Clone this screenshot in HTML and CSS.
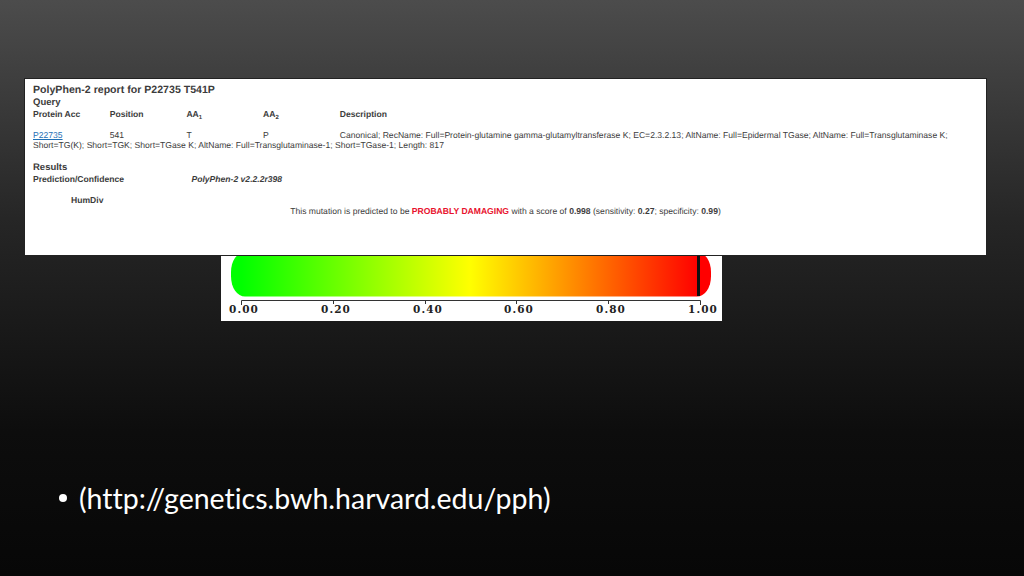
FILE: index.html
```html
<!DOCTYPE html>
<html lang="en">
<head>
<meta charset="utf-8">
<title>PolyPhen-2 report</title>
<link rel="stylesheet" href="styles.css">
</head>
<body>
<main class="slide">
  <section class="report">
    <h1 class="report-title">PolyPhen-2 report for P22735 T541P</h1>
    <h2 class="section-title">Query</h2>
    <div class="query-head">
      <span class="cell">Protein Acc</span><span class="cell">Position</span><span class="cell">AA<sub>1</sub></span><span class="cell">AA<sub>2</sub></span><span>Description</span>
    </div>
    <div class="query-row">
      <span class="cell"><a class="acc" href="#">P22735</a></span><span class="cell">541</span><span class="cell">T</span><span class="cell">P</span><span>Canonical; RecName: Full=Protein-glutamine gamma-glutamyltransferase K; EC=2.3.2.13; AltName: Full=Epidermal TGase; AltName: Full=Transglutaminase K;</span>
    </div>
    <div class="query-cont">Short=TG(K); Short=TGK; Short=TGase K; AltName: Full=Transglutaminase-1; Short=TGase-1; Length: 817</div>
    <h2 class="section-title results">Results</h2>
    <div class="result-head"><span class="pred">Prediction/Confidence</span><em class="version">PolyPhen-2 v2.2.2r398</em></div>
    <div class="humdiv">HumDiv</div>
    <p class="verdict">This mutation is predicted to be <strong class="damaging">PROBABLY DAMAGING</strong> with a score of <strong>0.998</strong> (sensitivity: <strong>0.27</strong>; specificity: <strong>0.99</strong>)</p>
  </section>
  <svg class="scale" width="501" height="65" viewBox="0 0 501 65" role="img" aria-label="Score scale">
    <defs>
      <linearGradient id="heat" gradientUnits="userSpaceOnUse" x1="20" y1="0" x2="478" y2="0">
        <stop offset="0" stop-color="#00ff00"/>
        <stop offset="0.5" stop-color="#ffff00"/>
        <stop offset="1" stop-color="#ff0000"/>
      </linearGradient>
    </defs>
    <rect class="scale-bg" width="501" height="65"/>
    <rect x="10" y="-4" width="480" height="44.500" rx="14" ry="20" fill="url(#heat)"/>
    <rect class="marker" x="476" y="0" width="3" height="40"/>
    <path class="axis" d="M20.500 49V44.500H479.500V49M112.500 44V48M204.500 44V48M295.500 44V48M387.500 44V48"/>
    <g class="ticks">
      <text x="23" y="57">0.00</text>
      <text x="115" y="57">0.20</text>
      <text x="207" y="57">0.40</text>
      <text x="298" y="57">0.60</text>
      <text x="390" y="57">0.80</text>
      <text x="482" y="57">1.00</text>
    </g>
  </svg>
  <ul class="notes">
    <li>(http://genetics.bwh.harvard.edu/pph)</li>
  </ul>
</main>
</body>
</html>
```
FILE: styles.css
```css
* { box-sizing: border-box; }
html, body { margin: 0; padding: 0; }
body { width: 1024px; height: 576px; overflow: hidden; background: #000; }
.slide {
  width: 1024px;
  height: 576px;
  padding-top: 78px;
  background: linear-gradient(180deg, #4c4c4c 0%, #262626 38%, #0d0d0d 75%, #070707 100%);
  font-family: "Liberation Sans", Arial, sans-serif;
}
.report {
  width: 963px;
  height: 178px;
  margin-left: 24px;
  padding: 5px 8px 0 8px;
  background: #fff;
  border: 1px solid #222;
  color: #3c3c3c;
  font-size: 8.580px;
  line-height: 10.500px;
  text-rendering: geometricPrecision;
}
.report-title { margin: 0; font-size: 10.600px; line-height: 12px; font-weight: bold; }
.section-title { margin: 2px 0 0; font-size: 9.500px; line-height: 10px; font-weight: bold; }
.results { margin-top: 11px; line-height: 11px; }
.query-head { display: flex; font-weight: bold; height: 12px; line-height: 12px; }
.query-row { display: flex; margin-top: 10px; height: 10px; white-space: nowrap; }
.cell { width: 76.700px; flex: none; }
.query-head sub { font-size: 6px; line-height: 0; vertical-align: -2px; }
.acc { color: #1f6fb5; text-decoration: underline; }
.result-head { display: flex; font-weight: bold; height: 12px; line-height: 12px; }
.pred { width: 158.500px; }
.version { font-style: italic; font-weight: bold; }
.humdiv { margin: 9px 0 0 38px; font-weight: bold; height: 12px; line-height: 12px; }
.verdict { margin: 0; text-align: center; height: 10px; line-height: 10px; }
.damaging { color: #e8112d; }
.scale { display: block; margin-left: 221px; }
.scale-bg { fill: #fff; }
.marker { fill: #111; }
.axis { fill: none; stroke: #333; stroke-width: 1; }
.ticks text {
  font-family: "DejaVu Serif", serif;
  font-weight: bold;
  font-size: 10.500px;
  letter-spacing: 1.100px;
  text-anchor: middle;
  fill: #222;
}
.notes {
  margin: 160px 0 0;
  padding: 0 0 0 79px;
  color: #fff;
  font-family: Lato, sans-serif;
  font-size: 28.500px;
  line-height: 34px;
  list-style: none;
  font-variant-ligatures: none;
}
.notes li { position: relative; }
.notes li::before {
  content: "";
  position: absolute;
  left: -20px;
  top: 13px;
  width: 8px;
  height: 8px;
  border-radius: 50%;
  background: #fff;
}
```
